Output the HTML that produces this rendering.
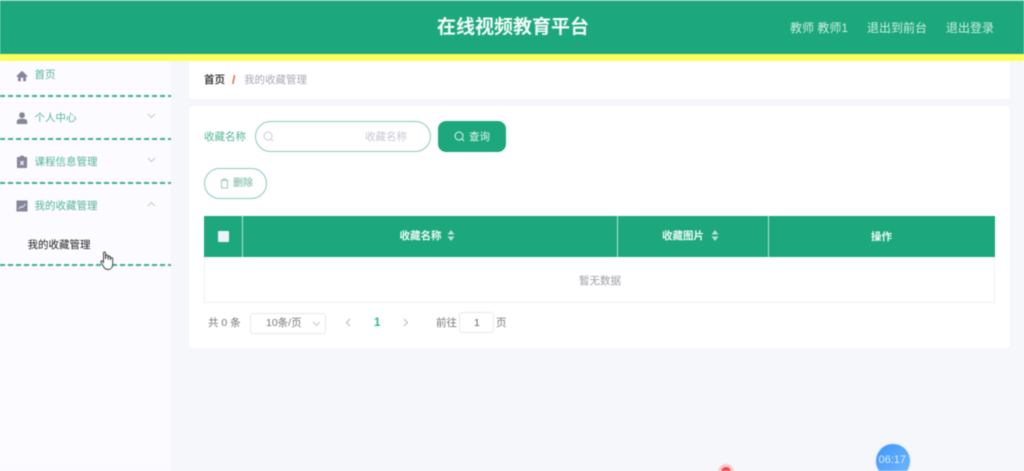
<!DOCTYPE html>
<html lang="zh">
<head>
<meta charset="utf-8">
<title>在线视频教育平台</title>
<style>
html,body{margin:0;padding:0}
body{width:1024px;height:471px;overflow:hidden;background:#f6f7fb;position:relative;font-family:"Liberation Sans","Noto Sans CJK SC",sans-serif;font-size:10.5px}
#w{position:absolute;left:0;top:0;width:1024px;height:471px;overflow:hidden;filter:blur(.5px)}
.a{position:absolute;white-space:nowrap;line-height:14px}
.b{position:absolute;box-sizing:border-box}
.dash{position:absolute;left:0;width:171px;height:2px;background:repeating-linear-gradient(90deg,#3fb08f 0,#3fb08f 5px,transparent 5px,transparent 8px)}
.m{color:#55b596}
svg{position:absolute;display:block}
.th{color:#eefaf5;font-weight:700;font-size:10.5px}
</style>
</head>
<body>
<div id="w">
<div class="b" style="left:0;top:0;width:1024px;height:54px;background:#1ca87c;border-top:1px solid #8fd0b8"></div>
<div class="b" style="left:0;top:54px;width:1024px;height:7px;background:#fdfd5c"></div>
<div class="a" style="left:437px;top:16px;line-height:24px;font-size:19px;font-weight:700;color:#f2fbf7">在线视频教育平台</div>
<div class="a" style="left:790px;top:21px;font-size:12px;color:#cfeee2">教师 教师1</div>
<div class="a" style="left:867px;top:21px;font-size:12px;color:#cfeee2">退出到前台</div>
<div class="a" style="left:946px;top:21px;font-size:12px;color:#cfeee2">退出登录</div>

<div class="b" style="left:0;top:61px;width:171px;height:410px;background:#fcfbff"></div>
<svg style="left:16px;top:70px" width="12" height="12" viewBox="0 0 12 12"><path d="M6 .8 .3 6.2 1.2 7 2 6.4V11.2H4.8V7.6H7.2V11.2H10V6.4L10.800 7 11.700 6.200Z" fill="#85869a"/></svg>
<div class="a m" style="left:34.500px;top:68px">首页</div>
<div class="dash" style="top:95px"></div>
<svg style="left:16px;top:112px" width="12" height="12" viewBox="0 0 12 12"><circle cx="6" cy="3.200" r="2.900" fill="#85869a"/><path d="M.8 12V9.500C.8 7.600 2.600 6.800 6 6.800S11.200 7.600 11.200 9.500V12Z" fill="#85869a"/></svg>
<div class="a m" style="left:34.500px;top:111px">个人中心</div>
<svg style="left:147px;top:113px" width="9" height="6" viewBox="0 0 9 6"><path d="M1 1 4.500 4.500 8 1" fill="none" stroke="#c5c8d0" stroke-width="1"/></svg>
<div class="dash" style="top:182px"></div>
<div class="dash" style="top:138px"></div>
<svg style="left:16px;top:155px" width="12" height="13" viewBox="0 0 12 13"><path d="M1 2H4V.7H8V2H11V13H1Z" fill="#85869a"/><path d="M4.300 6 7.700 10M7.700 6 4.300 10" stroke="#fff" stroke-width="1"/></svg>
<div class="a m" style="left:34.500px;top:155px">课程信息管理</div>
<svg style="left:147px;top:157px" width="9" height="6" viewBox="0 0 9 6"><path d="M1 1 4.500 4.500 8 1" fill="none" stroke="#c5c8d0" stroke-width="1"/></svg>
<svg style="left:16px;top:200px" width="12" height="12" viewBox="0 0 12 12"><rect width="11" height="11" x=".5" y=".5" fill="#85869a"/><path d="M2.500 9 5 6.500 6.500 7.500 9.500 4" fill="none" stroke="#fff" stroke-width=".8"/></svg>
<div class="a m" style="left:34.500px;top:199px">我的收藏管理</div>
<svg style="left:147px;top:201px" width="9" height="6" viewBox="0 0 9 6"><path d="M1 5 4.500 1.500 8 5" fill="none" stroke="#c5c8d0" stroke-width="1"/></svg>
<div class="a" style="left:27.500px;top:238px;color:#222">我的收藏管理</div>
<div class="dash" style="top:264px"></div>
<svg style="left:100px;top:251px" width="15" height="20" viewBox="0 0 15 20"><path d="M3.500 2C3.500.6 5.500.6 5.500 2V8L6 4.500C6.500 3.500 8 3.800 8 5V8.500L8.500 5.500C9 4.700 10.300 5 10.300 6V9L10.800 7C11.300 6.300 12.700 6.600 12.700 7.600V13C12.700 16 11.200 18.500 8 18.500 5.500 18.500 4.500 17.500 3.500 15.500L1 11.500C.4 10.300 1.800 9.300 2.800 10.300L3.500 11.300Z" fill="#fff" stroke="#444" stroke-width="1"/></svg>

<div class="b" style="left:189px;top:61px;width:821px;height:38px;background:#fff;border-radius:0 0 4px 4px"></div>
<div class="a" style="left:204px;top:73px;font-weight:700;color:#444">首页</div>
<div class="a" style="left:232px;top:73px;font-size:12px;font-weight:700;color:#e0603c">/</div>
<div class="a" style="left:244px;top:73px;color:#a8abb8">我的收藏管理</div>

<div class="b" style="left:189px;top:106px;width:821px;height:242px;background:#fff;border-radius:4px"></div>
<div class="a m" style="left:204px;top:130px">收藏名称</div>
<div class="b" style="left:255px;top:121px;width:176px;height:31px;border:1.500px solid #8ccdb6;border-radius:16px;background:#fff"></div>
<svg style="left:263px;top:131px" width="11" height="11" viewBox="0 0 11 11"><circle cx="5" cy="5" r="4" fill="none" stroke="#c8cbd6" stroke-width="1"/><path d="M8 8 10 10" stroke="#c8cbd6"/></svg>
<div class="a" style="left:365px;top:130px;color:#c6c8d2">收藏名称</div>
<div class="b" style="left:438px;top:121px;width:68px;height:31px;background:#1ca87c;border-radius:8px"></div>
<svg style="left:454px;top:131px" width="11" height="11" viewBox="0 0 11 11"><circle cx="5" cy="5" r="4" fill="none" stroke="#e8f7f1" stroke-width="1"/><path d="M8 8 10 10" stroke="#e8f7f1"/></svg>
<div class="a" style="left:469px;top:130px;color:#e8f7f1">查询</div>
<div class="b" style="left:204px;top:168px;width:63px;height:31px;border:1.500px solid #8ccdb6;border-radius:16px;background:#fff"></div>
<svg style="left:220px;top:178px" width="9" height="11" viewBox="0 0 9 11"><path d="M.5 2.500H8.500M3 2.500V1H6V2.500M1.500 2.500V10H7.500V2.500" fill="none" stroke="#9ac9b8" stroke-width="1"/></svg>
<div class="a" style="left:233px;top:177px;font-size:10px;font-weight:700;color:#9cc9ba">删除</div>

<div class="b" style="left:204px;top:216px;width:791px;height:87px;border:1px solid #eef0f5;background:#fff"></div>
<div class="b" style="left:204px;top:216px;width:791px;height:41px;background:#1ca87c"></div>
<div class="b" style="left:242px;top:216px;width:1px;height:41px;background:#b9e3d3"></div>
<div class="b" style="left:617px;top:216px;width:1px;height:41px;background:#b9e3d3"></div>
<div class="b" style="left:768px;top:216px;width:1px;height:41px;background:#b9e3d3"></div>
<div class="b" style="left:218px;top:231px;width:11px;height:11px;background:#eef2fb;border-radius:1px"></div>
<div class="a th" style="left:399.500px;top:229px">收藏名称</div>
<svg style="left:447px;top:230px" width="8" height="11" viewBox="0 0 8 11"><path d="M4 0 7.500 4.500H.5ZM4 11 .5 6.500H7.500Z" fill="#b9dfd0"/></svg>
<div class="a th" style="left:662px;top:229px">收藏图片</div>
<svg style="left:711px;top:230px" width="8" height="11" viewBox="0 0 8 11"><path d="M4 0 7.500 4.500H.5ZM4 11 .5 6.500H7.500Z" fill="#b9dfd0"/></svg>
<div class="a th" style="left:871px;top:230px">操作</div>
<div class="a" style="left:579px;top:274px;color:#9b9da3">暂无数据</div>

<div class="a" style="left:208px;top:316px;color:#777">共 0 条</div>
<div class="b" style="left:250px;top:313px;width:76px;height:21px;border:1px solid #e6e8ee;border-radius:3px"></div>
<div class="a" style="left:266px;top:316px;color:#777">10条/页</div>
<svg style="left:312px;top:321px" width="9" height="6" viewBox="0 0 9 6"><path d="M1 1 4.500 4.500 8 1" fill="none" stroke="#c5c8d0"/></svg>
<svg style="left:345px;top:318px" width="6" height="9" viewBox="0 0 6 9"><path d="M5 1 1.500 4.500 5 8" fill="none" stroke="#b5b8c2"/></svg>
<div class="a" style="left:374px;top:316px;font-size:11.500px;font-weight:700;color:#2fb48c">1</div>
<svg style="left:403px;top:318px" width="6" height="9" viewBox="0 0 6 9"><path d="M1 1 4.500 4.500 1 8" fill="none" stroke="#b5b8c2"/></svg>
<div class="a" style="left:436px;top:316px;color:#777">前往</div>
<div class="b" style="left:459px;top:312px;width:35px;height:21px;border:1px solid #e6e8ee;border-radius:3px"></div>
<div class="a" style="left:474px;top:316px;color:#666">1</div>
<div class="a" style="left:496px;top:316px;color:#777">页</div>

<div class="b" style="left:718px;top:464px;width:16px;height:16px;border-radius:50%;background:#fbc9cb"></div>
<div class="b" style="left:721px;top:467px;width:10px;height:10px;border-radius:50%;background:#f2454f"></div>
<div class="b" style="left:876px;top:444px;width:34px;height:34px;border-radius:50%;background:linear-gradient(140deg,#3d97fb,#75b8fd);box-shadow:0 0 2px 1px #e3ecfa"></div>
<div class="a" style="left:878.500px;top:453px;font-size:11px;color:#d7e9ff">06:17</div>
</div>
</body>
</html>
